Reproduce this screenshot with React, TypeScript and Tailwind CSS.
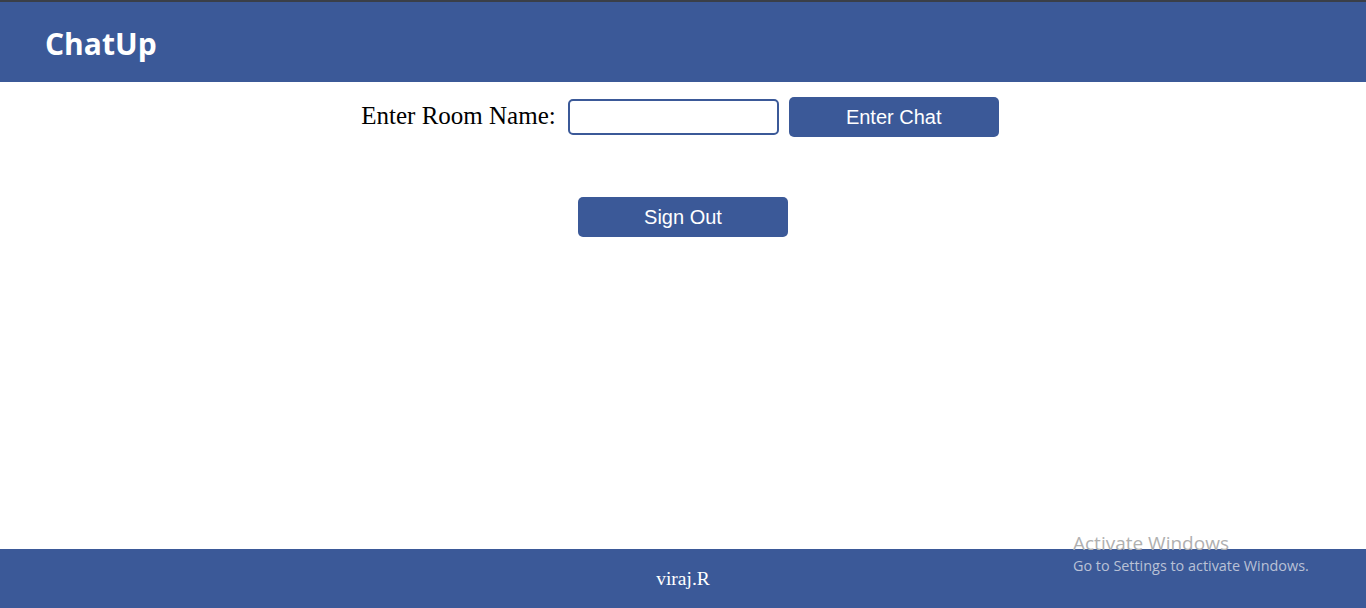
export default function App() {
  return (
    <div className="relative flex min-h-[608px] flex-col bg-white">
      <header className="flex h-[82px] items-center border-t-2 border-[#3a3f48] bg-[#3b5998] pb-[1px] pl-[45px] pt-[4px]">
        <h1 className="font-['Open_Sans',sans-serif] text-[30px] font-bold leading-none text-white">ChatUp</h1>
      </header>

      <main className="flex flex-col items-center pt-[15px]">
        <div className="mr-[6px] flex items-center">
          <label className="pb-[3px] font-['Liberation_Serif',serif] text-[25px] leading-none text-black">
            Enter Room Name:
          </label>
          <input
            type="text"
            className="ml-[12px] h-[36px] w-[211px] rounded-[5px] border-2 border-[#3b5998] bg-white px-2 outline-none"
          />
          <button className="ml-[10px] h-[40px] w-[210px] rounded-[5px] bg-[#3b5998] font-['Liberation_Sans',sans-serif] text-[20px] text-white">
            Enter Chat
          </button>
        </div>

        <button className="mt-[60px] h-[40px] w-[210px] rounded-[5px] bg-[#3b5998] font-['Liberation_Sans',sans-serif] text-[20px] text-white">
          Sign Out
        </button>
      </main>

      <footer className="mt-auto flex h-[59px] items-center justify-center bg-[#3b5998] pt-[1px]">
        <span className="font-['Liberation_Serif',serif] text-[19.5px] text-white">viraj.R</span>
      </footer>

      {/* windows activation watermark */}
      <div className="pointer-events-none absolute left-[1073px] top-[531px] font-['Open_Sans',sans-serif] text-[#b0b0b0]">
        <div className="text-[19px] leading-[24px]">Activate Windows</div>
        <div className="text-[14.4px] leading-[21px] text-[#b9c1d6]">Go to Settings to activate Windows.</div>
      </div>
    </div>
  );
}
